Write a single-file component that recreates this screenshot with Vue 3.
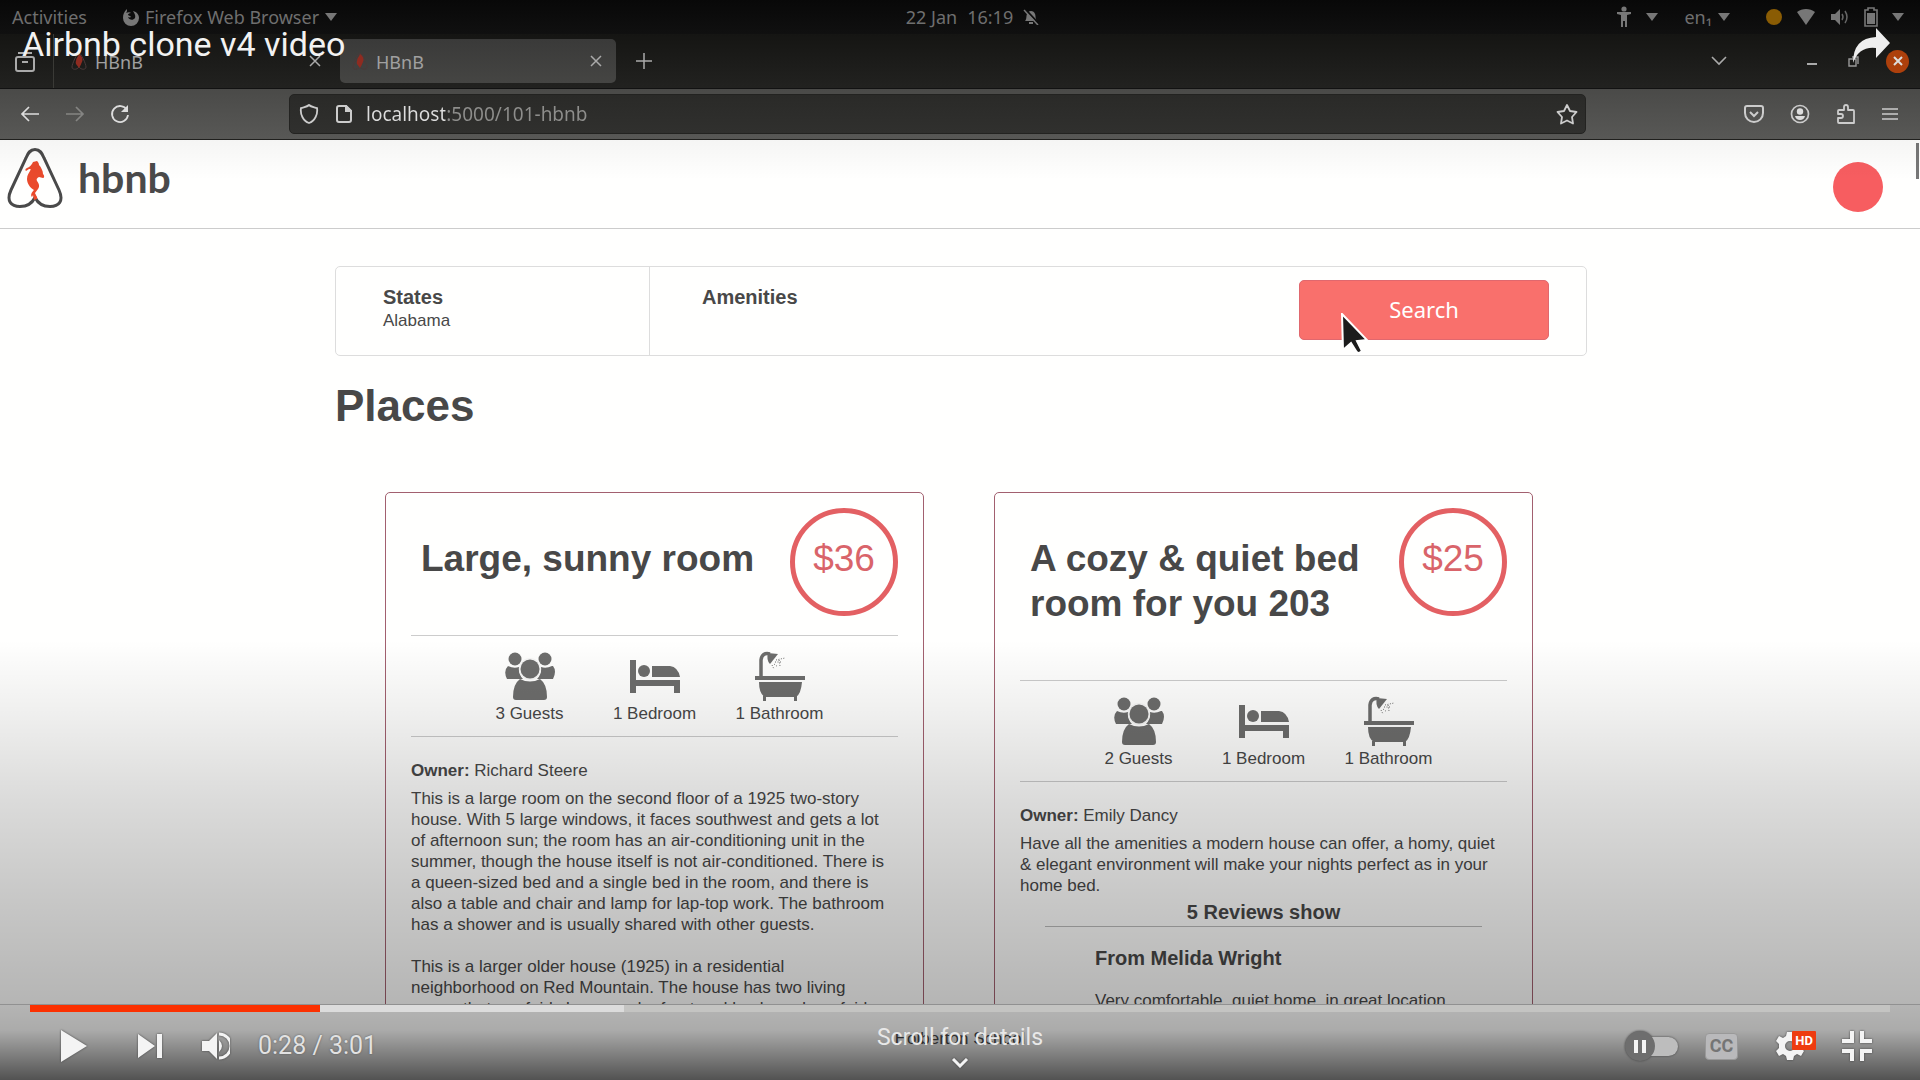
<script setup>
import { ref } from 'vue'

const elapsed = ref(28)
const duration = 181
const address = ref('localhost:5000/101-hbnb')
const tabs = [
  { title: 'HBnB', active: false },
  { title: 'HBnB', active: true },
]
const places = [
  {
    name: 'Large, sunny room',
    price: 36,
    guests: '3 Guests',
    owner: 'Richard Steere',
    text: `This is a large room on the second floor of a 1925 two-story
house. With 5 large windows, it faces southwest and gets a lot
of afternoon sun; the room has an air-conditioning unit in the
summer, though the house itself is not air-conditioned. There is
a queen-sized bed and a single bed in the room, and there is
also a table and chair and lamp for lap-top work. The bathroom
has a shower and is usually shared with other guests.

This is a larger older house (1925) in a residential
neighborhood on Red Mountain. The house has two living
rooms that are fairly large, and a front and back yard are fairly`,
    reviews: [],
  },
  {
    name: 'A cozy & quiet bed room for you 203',
    price: 25,
    guests: '2 Guests',
    owner: 'Emily Dancy',
    text: `Have all the amenities a modern house can offer, a homy, quiet
& elegant environment will make your nights perfect as in your
home bed.`,
    reviews: [{ from: 'From Melida Wright', text: 'Very comfortable, quiet home, in great location.' }],
  },
]
</script>

<template>
  <div class="player">
    <div class="topbar">
      <div class="bar-group">
        <span class="activities">Activities</span>
        <svg class="fox" viewBox="0 0 18 18" width="18" height="18"><path d="M5 1c0 2 0 3-1 4 2-1 4-1 5 0-2 0-3 1-3 2 1 1 3 1 3 2-1 1-3 0-3 0 1 3 5 4 7 1 1-3-1-5-2-7 4 1 6 4 6 7a8 8 0 0 1-16 0c0-4 1-6 4-9z" fill="#777" /></svg>
        <span>Firefox Web Browser</span>
        <i class="caret"></i>
      </div>
      <div class="bar-group clock">
        <span>22 Jan</span><span>16:19</span>
        <svg viewBox="0 0 16 16" width="16" height="16"><path d="M2 12c2-2 1-5 2-7 1-4 7-4 8 0 1 2 0 5 2 7zM6 13h4v2H6z" fill="#777" /><path d="M2 0l14 15" stroke="#0c0c0c" stroke-width="2" /><path d="M1 1l14 15" stroke="#777" stroke-width="1.5" /></svg>
      </div>
      <div class="bar-group status">
        <svg viewBox="0 0 16 22" width="16" height="22"><circle cx="8" cy="3" r="2.6" fill="#777" /><path d="M1 6h14v2l-4 1v12H9v-6H7v6H5V9L1 8z" fill="#777" /></svg>
        <i class="caret"></i>
        <span class="lang">en₁</span>
        <i class="caret"></i>
        <i class="dot"></i>
        <svg class="wifi" viewBox="0 0 20 18" width="20" height="18"><path d="M1 4C6 0 14 0 19 4L10 17z" fill="#777" /></svg>
        <svg class="sound" viewBox="0 0 20 18" width="20" height="18"><path d="M1 6h4l5-5v16l-5-5H1z" fill="#777" /><path d="M12 6q2 3 0 6M15 3q4 6 0 12" fill="none" stroke="#666" stroke-width="1.5" /></svg>
        <svg class="battery" viewBox="0 0 14 20" width="14" height="20"><path d="M4 1h6v2h3v16H1V3h3z" fill="none" stroke="#777" stroke-width="1.6" /><path d="M3 6h8v11H3z" fill="#777" /></svg>
        <i class="caret"></i>
      </div>
    </div>

    <div class="tabbar">
      <button class="icon recent" aria-label="Recent tabs"><svg viewBox="0 0 22 22" width="22" height="22" fill="none" stroke="#aaa" stroke-width="2"><rect x="2" y="7" width="18" height="14" rx="2" /><path d="M4 3h14M8 12h6" /></svg></button>
      <div v-for="(tab, i) in tabs" :key="i" class="tab" :class="{ active: tab.active }">
        <svg class="favicon" viewBox="0 0 16 18" width="16" height="18"><path d="M8 1C6 1 1 12 1 15c0 3 5 3 7 0 2 3 7 3 7 0C15 12 10 1 8 1z" fill="none" stroke="#4b3a3a" stroke-width="1" /><path d="M8 2c4 3 4 6 3 8-1 2-1 3-3 6-2-3-4-4-3-7 0-3 2-4 3-7z" fill="#8f2b20" /></svg>
        <span>{{ tab.title }}</span>
        <button class="icon" aria-label="Close tab"><svg viewBox="0 0 12 12" width="12" height="12" stroke="#aaa" stroke-width="1.5"><path d="M1 1l10 10M11 1L1 11" /></svg></button>
      </div>
      <button class="icon plus" aria-label="New tab"><svg viewBox="0 0 16 16" width="16" height="16" stroke="#aaa" stroke-width="1.5"><path d="M8 0v16M0 8h16" /></svg></button>
      <div class="window-buttons">
        <button class="icon" aria-label="List all tabs"><svg viewBox="0 0 16 10" width="16" height="10" fill="none" stroke="#aaa" stroke-width="1.6"><path d="M1 1l7 7 7-7" /></svg></button>
        <button class="icon minimise" aria-label="Minimise"><svg viewBox="0 0 10 10" width="10" height="10"><path d="M0 8h10" stroke="#aaa" stroke-width="2" /></svg></button>
        <button class="icon restore" aria-label="Restore"><svg viewBox="0 0 11 11" width="11" height="11" fill="none" stroke="#999" stroke-width="1.4"><path d="M1 3h7v7H1zM4 1h6v7" /></svg></button>
        <button class="icon close" aria-label="Close window"><svg viewBox="0 0 10 10" width="10" height="10" stroke="#ddd" stroke-width="2"><path d="M1 1l8 8M9 1L1 9" /></svg></button>
      </div>
    </div>

    <div class="toolbar">
      <div class="nav">
        <button class="icon" aria-label="Back"><svg viewBox="0 0 20 18" width="20" height="18" fill="none" stroke="#ddd" stroke-width="1.7"><path d="M19 9H2M9 2L2 9l7 7" /></svg></button>
        <button class="icon" aria-label="Forward"><svg viewBox="0 0 20 18" width="20" height="18" fill="none" stroke="#858583" stroke-width="1.7"><path d="M1 9h17M11 2l7 7-7 7" /></svg></button>
        <button class="icon" aria-label="Reload"><svg viewBox="0 0 20 20" width="20" height="20"><path d="M17 6a8 8 0 1 0 1 5" fill="none" stroke="#ddd" stroke-width="1.8" /><path d="M18 1v7h-7z" fill="#ddd" /></svg></button>
      </div>
      <div class="address">
        <svg viewBox="0 0 20 20" width="20" height="20" fill="none" stroke="#ccc" stroke-width="1.8"><path d="M10 1c2 2 5 2 8 3 1 6-2 13-8 15C4 17 1 10 2 4c3-1 6-1 8-3z" /></svg>
        <svg class="doc" viewBox="0 0 16 18" width="16" height="18" fill="none" stroke="#ccc" stroke-width="2"><path d="M3 1h7l5 5v9q0 2-2 2H3q-2 0-2-2V3q0-2 2-2z" /><path d="M10 1v5h5z" fill="#ccc" /></svg>
        <input v-model="address" aria-label="Address" spellcheck="false" />
        <button class="icon" aria-label="Bookmark"><svg viewBox="0 0 22 22" width="22" height="22" fill="none" stroke="#ccc" stroke-width="1.8" stroke-linejoin="round"><path d="M11 2l3 6 6.500 1-4.500 5 1 6.500-6-3-6 3 1-6.500-4.500-5L8 8z" /></svg></button>
      </div>
      <div class="tools">
        <button class="icon" aria-label="Pocket"><svg viewBox="0 0 20 20" width="20" height="20" fill="none" stroke="#ccc" stroke-width="2"><path d="M3 2h14q2 0 2 2v5a9 9 0 0 1-18 0V4q0-2 2-2z" /><path d="M6 8l4 4 4-4" /></svg></button>
        <button class="icon" aria-label="Account"><svg viewBox="0 0 20 20" width="20" height="20"><circle cx="10" cy="10" r="8.500" fill="none" stroke="#ccc" stroke-width="1.7" /><circle cx="10" cy="7.500" r="3.200" fill="#ddd" /><path d="M5 12h10q-1 4-5 4t-5-4z" fill="#ddd" /></svg></button>
        <button class="icon" aria-label="Extensions"><svg viewBox="0 0 20 22" width="20" height="22" fill="none" stroke="#ccc" stroke-width="1.8" stroke-linejoin="round"><path d="M3 7h5V4q0-2 2-2t2 2v3h5q1 0 1 1v12H3q-1 0-1-1v-4h3q2 0 2-2t-2-2H2V8q0-1 1-1z" /></svg></button>
        <button class="icon" aria-label="Menu"><svg viewBox="0 0 16 14" width="16" height="14" stroke="#ccc" stroke-width="1.6"><path d="M0 2h16M0 7h16M0 12h16" /></svg></button>
      </div>
    </div>

    <div class="page">
      <header class="site-header">
        <a href="#" class="logo">
          <svg viewBox="0 0 56 62" width="56" height="62"><path d="M28 2.500C23 2.500 21 6 19 11L4 43c-5 11 0 16.500 9 16.500 7 0 12-3 15-9 3 6 8 9 15 9 9 0 14-5.500 9-16.500L37 11c-2-5-4-8.500-9-8.500z" fill="none" stroke="#4a4a4a" stroke-width="3" /><path d="M30 14c1 1 2 2 2 4 2 2 4 6 4 9 2 2 1 4 0 4l-4-1c-2 1-3 2-2 4 2 3 3 5 1 8l-3 4c1 3 3 4 2 6l-3 1-1-5-1 2c-2-2 0-5 2-7-4-2-7-7-7-11 0-4 2-6 3-8 1-2 1-2-1-2l-3 2c-1-1-1-2 1-3 3-1 5-4 6-6z" fill="#ea4a2c" /></svg>
          <span>hbnb</span>
        </a>
        <i class="avatar"></i>
      </header>
      <main>
        <section class="filters">
          <div class="states"><h3>States</h3><p>Alabama</p></div>
          <div class="amenities"><h3>Amenities</h3></div>
          <button class="search">
            Search
            <svg class="cursor" viewBox="0 0 28 42" width="28" height="42"><path d="M1 1l25 26-10 1 5 10q-4 4-6 0l-5-8-8 7z" fill="#1c1c1c" stroke="#fff" stroke-width="2" /></svg>
          </button>
        </section>
        <h1>Places</h1>
        <section class="places">
          <article v-for="place in places" :key="place.name">
            <div class="headline">
              <h2>{{ place.name }}</h2>
              <div class="price">${{ place.price }}</div>
            </div>
            <div class="info">
              <div>
                <svg viewBox="0 0 50 50" width="50" height="50" fill="#6d6d6c"><circle cx="10" cy="8" r="6.500" /><circle cx="40" cy="8" r="6.500" /><path d="M3 15q6 3 11 1-1 7 4 12H2q-4-8 1-13zM47 15q-6 3-11 1 1 7-4 12h16q4-8 0-13z" /><circle cx="25" cy="18" r="11" fill="#f6f6f5" /><circle cx="25" cy="18" r="9.500" /><path d="M15 28q10 5 20 0 7 5 7 18 0 3-3 3H11q-3 0-3-3 0-13 7-18z" /></svg>
                <span>{{ place.guests }}</span>
              </div>
              <div>
                <svg viewBox="0 0 50 50" width="50" height="50" fill="#6d6d6c"><path d="M0 9h6v20h44v13h-6v-7H6v7H0z" /><circle cx="14" cy="20" r="6" /><path d="M22 15h18q8 1 10 11H22z" /></svg>
                <span>1 Bedroom</span>
              </div>
              <div>
                <svg viewBox="0 0 50 50" width="50" height="50" fill="#6d6d6c"><path d="M0 25h50v4H0zM4 31h43q-1 12-6 15H10Q4 43 4 31zM8 45h3v5H8zM39 45h3v5h-3z" /><path d="M6 26V9q1-8 9-6" fill="none" stroke="#6d6d6c" stroke-width="3.500" /><path d="M13 2l10 1-8 10q-4-4-2-11z" /><path d="M21 9l9-2M20 11l7 0M19 13l4 3M17 14l2 4M24 9l1 6" fill="none" stroke="#6d6d6c" stroke-dasharray="1 1.500" /></svg>
                <span>1 Bathroom</span>
              </div>
            </div>
            <p class="owner"><b>Owner:</b> {{ place.owner }}</p>
            <p class="about">{{ place.text }}</p>
            <div v-if="place.reviews.length" class="reviews">
              <h3>5 Reviews <span>show</span></h3>
              <ul>
                <li v-for="review in place.reviews" :key="review.from">
                  <h4>{{ review.from }}</h4>
                  <p>{{ review.text }}</p>
                </li>
              </ul>
            </div>
          </article>
        </section>
      </main>
      <footer>Holberton School</footer>
      <i class="scrollbar"></i>
      <div class="scrim"></div>
    </div>

    <div class="video-title">Airbnb clone v4 video</div>
    <button class="icon share" aria-label="Share"><svg viewBox="0 0 38 36" width="38" height="36"><path d="M23 0l14 15-14 15V20Q6 18 0 35 0 10 23 9z" fill="#eee" /></svg></button>

    <div class="controls">
      <input
        v-model.number="elapsed"
        class="progress"
        type="range"
        min="0"
        :max="duration"
        aria-label="Seek"
      />
      <div class="control-row">
        <div class="left">
          <button class="icon" aria-label="Play"><svg viewBox="0 0 26 32" width="26" height="32"><path d="M0 0l26 16L0 32z" /></svg></button>
          <button class="icon" aria-label="Next"><svg viewBox="0 0 24 26" width="24" height="26"><path d="M0 1l17 12L0 25zM19 1h5v24h-5z" /></svg></button>
          <button class="icon" aria-label="Mute"><svg viewBox="0 0 28 28" width="28" height="28"><path d="M0 9h7l8-8v26l-8-8H0z" /><path d="M17 8q6 6 0 12z" /><path d="M17 2a12 12 0 0 1 0 24" fill="none" stroke="#f4f4f4" stroke-width="3" /></svg></button>
          <span class="time">0:28 / 3:01</span>
        </div>
        <button class="details">
          Scroll for details
          <svg viewBox="0 0 18 10" width="18" height="10"><path d="M2 1l7 7 7-7" fill="none" stroke="#f4f4f4" stroke-width="3" /></svg>
        </button>
        <div class="right">
          <button class="icon autoplay" role="switch" aria-checked="false" aria-label="Autoplay"><svg viewBox="0 0 56 32" width="56" height="32"><rect x="12" y="7" width="42" height="19" rx="9.500" fill="#bdbdbd" /><circle cx="16" cy="16" r="15" fill="#6e6e6e" /><path d="M10 10h4v13h-4zM18 10h4v13h-4z" /></svg></button>
          <button class="icon captions" aria-label="Captions"><span>CC</span></button>
          <button class="icon settings" aria-label="Settings">
            <svg viewBox="0 0 28 28" width="28" height="28"><path fill-rule="evenodd" d="M11 0h6l1 4 3 2 4-2 3 5-3 3v4l3 3-3 5-4-2-3 2-1 4h-6l-1-4-3-2-4 2-3-5 3-3v-4L0 9l3-5 4 2 3-2zM14 9a5 5 0 1 0 0 10 5 5 0 0 0 0-10z" /></svg>
            <span class="hd">HD</span>
          </button>
          <button class="icon" aria-label="Exit full screen"><svg viewBox="0 0 30 30" width="30" height="30" fill="none" stroke="#f4f4f4" stroke-width="4"><path d="M0 10h10V0M20 0v10h10M0 20h10v10M20 30V20h10" /></svg></button>
        </div>
      </div>
    </div>
  </div>
</template>

<style>
body {
  margin: 0;
}
</style>

<style scoped>
* {
  box-sizing: border-box;
}
.player {
  position: relative;
  display: flex;
  flex-direction: column;
  height: 100vh;
  overflow: hidden;
  font-family: "Liberation Sans", Arial, sans-serif;
  color: #484848;
}
h1, h2, h3, h4, p, ul {
  margin: 0;
  padding: 0;
  list-style: none;
}
svg {
  display: block;
  flex: none;
}
.icon {
  display: flex;
  align-items: center;
  flex: none;
  padding: 0;
  border: 0;
  background: none;
  cursor: pointer;
}

/* desktop bar */
.topbar {
  display: grid;
  grid-template-columns: 1fr auto 1fr;
  height: 34px;
  padding: 0 16px 0 12px;
  background: linear-gradient(#080808, #101010);
  font: 18px/34px "Noto Sans", sans-serif;
  color: #6f6f6f;
}
.bar-group {
  display: flex;
  align-items: center;
}
.activities {
  margin-right: 35px;
}
.fox {
  margin-right: 5px;
}
.caret {
  margin-left: 6px;
  border: 6px solid transparent;
  border-top: 8px solid #777;
  border-bottom: 0;
}
.clock {
  gap: 10px;
  padding-left: 29px;
}
.status {
  justify-content: flex-end;
}
.status .caret {
  margin-left: 14px;
}
.lang {
  margin-left: 26px;
}
.lang + .caret {
  margin-left: 6px;
}
.dot {
  width: 16px;
  height: 16px;
  margin-left: 36px;
  border-radius: 50%;
  background: #8a5c04;
}
.wifi, .sound, .battery {
  margin-left: 14px;
}

/* tabs */
.tabbar {
  display: flex;
  align-items: center;
  height: 55px;
  border-bottom: 1px solid #121212;
  background: linear-gradient(#151513, #222220);
  font: 18px/24px "Noto Sans", sans-serif;
  color: #a0a0a0;
}
.recent {
  align-self: stretch;
  width: 54px;
  padding: 0 0 0 14px;
  border-right: 1px solid #3a3a36;
}
.tab {
  display: flex;
  align-items: center;
  gap: 8px;
  width: 276px;
  height: 44px;
  padding: 0 14px 0 12px;
  border-radius: 5px;
}
.tab span {
  padding-top: 2px;
}
.tab:first-of-type {
  margin: 0 5px;
}
.tab.active {
  background: linear-gradient(#3a3a39, #454543);
}
.tab .icon {
  margin-left: auto;
}
.plus {
  margin-left: 20px;
}
.window-buttons {
  display: flex;
  align-items: center;
  margin: 0 11px 0 auto;
}
.minimise {
  margin-left: 80px;
}
.restore {
  margin-left: 31px;
}
.close {
  justify-content: center;
  width: 23px;
  height: 23px;
  margin-left: 27px;
  border-radius: 50%;
  background: #ad400c;
}

/* toolbar */
.toolbar {
  display: flex;
  align-items: center;
  height: 51px;
  border-bottom: 1px solid #20201e;
  background: linear-gradient(#4a4a48, #585856);
}
.nav {
  display: flex;
  gap: 25px;
  width: 289px;
  padding-left: 20px;
}
.address {
  display: flex;
  flex: 1;
  align-items: center;
  height: 40px;
  padding: 0 7px 0 9px;
  border: 1px solid #232321;
  border-radius: 5px;
  background: linear-gradient(#2a2a28, #30302e);
}
.doc {
  margin: 0 14px 0 17px;
}
.address input {
  flex: 1;
  min-width: 0;
  padding: 0;
  border: 0;
  outline: 0;
  background: linear-gradient(90deg, #ddd 79px, #8e8e8c 79px);
  background-clip: text;
  color: transparent;
  font: 19px/28px "Noto Sans", sans-serif;
}
.tools {
  display: flex;
  align-items: center;
  justify-content: flex-end;
  gap: 26px;
  width: 334px;
  padding-right: 22px;
}

/* web page */
.page {
  position: relative;
  display: flex;
  flex: 1;
  flex-direction: column;
  min-height: 0;
  background: #fffffe;
}
.site-header {
  display: flex;
  align-items: flex-start;
  justify-content: space-between;
  height: 89px;
  padding: 0 37px 0 7px;
  border-bottom: 1px solid #ccc;
}
.logo {
  display: flex;
  align-items: center;
  gap: 15px;
  padding-top: 7px;
  color: #4a4a4a;
  font: 700 41px/52px Lato, sans-serif;
  text-decoration: none;
}
.avatar {
  width: 50px;
  height: 50px;
  margin-top: 22px;
  border-radius: 50%;
  background: #f75d60;
}
main {
  flex: 1;
  width: 1254px;
  max-width: 100%;
  min-height: 0;
  margin: 0 auto;
  padding-left: 2px;
  overflow: hidden;
}
.filters {
  display: flex;
  align-items: flex-start;
  height: 90px;
  margin-top: 37px;
  border: 1px solid #ddd;
  border-radius: 5px;
}
h3, h4 {
  font-size: 20px;
  line-height: 24px;
}
.states, .amenities {
  height: 100%;
  padding-top: 18px;
}
.states {
  width: 314px;
  padding-left: 47px;
  border-right: 1px solid #ddd;
}
.states p {
  font-size: 17px;
  line-height: 24px;
}
.amenities {
  flex: 1;
  padding-left: 52px;
}
.search {
  position: relative;
  width: 250px;
  height: 60px;
  margin: 13px 37px 0 0;
  padding: 0 0 2px;
  border: 1px solid #e0686e;
  border-radius: 5px;
  background: #f9706c;
  color: #fff;
  font: 22px/28px "Noto Sans", sans-serif;
}
.cursor {
  position: absolute;
  top: 32px;
  left: 41px;
}
h1 {
  margin-top: 24px;
  font-size: 44px;
  line-height: 52px;
}
.places {
  display: flex;
  align-items: flex-start;
  gap: 70px;
  margin-top: 60px;
  padding: 0 54px 0 50px;
}
article {
  flex: 1;
  min-width: 0;
  padding: 0 25px 60px;
  border: 1px solid #a2606f;
  border-radius: 5px;
  font-size: 17px;
  line-height: 21px;
}
.headline {
  display: flex;
  align-items: flex-start;
}
h2 {
  flex: 1;
  padding: 43px 18px 54px 10px;
  font-size: 37px;
  line-height: 45px;
}
.price {
  width: 108px;
  height: 108px;
  margin-top: 15px;
  border: 5px solid #e36063;
  border-radius: 50%;
  color: #d9646a;
  font-size: 37px;
  line-height: 92px;
  text-align: center;
}
.info {
  display: flex;
  justify-content: center;
  padding: 15px 0 12px;
  border: solid #ccc;
  border-width: 1px 0;
}
.info div {
  display: flex;
  flex-direction: column;
  align-items: center;
  gap: 2px;
  width: 125px;
}
.owner {
  margin: 23px 0 7px;
}
.about {
  white-space: pre;
}
.reviews {
  padding: 4px 25px 0;
}
.reviews h3 {
  padding-bottom: 2px;
  border-bottom: 1px solid #bbb;
  text-align: center;
}
.reviews ul {
  padding: 19px 0 0 50px;
}
.reviews h4 {
  margin-bottom: 20px;
}
.reviews li p {
  white-space: nowrap;
}
footer {
  height: 76px;
  border-top: 1px solid #ccc;
  font-size: 17px;
  line-height: 68px;
  text-align: center;
}
.scrollbar {
  position: absolute;
  top: 3px;
  right: 1px;
  width: 3px;
  height: 36px;
  background: #777;
}
.scrim {
  position: absolute;
  inset: 0;
  background:
    linear-gradient(rgb(0 0 0 / 4%), transparent 40px),
    linear-gradient(
      to top,
      rgb(0 0 0 / 68%),
      rgb(0 0 0 / 33%) 50px,
      rgb(0 0 0 / 29%) 76px,
      rgb(0 0 0 / 22%) 180px,
      rgb(0 0 0 / 14%) 280px,
      rgb(0 0 0 / 5%) 380px,
      transparent 440px
    );
  pointer-events: none;
}

/* player overlay */
.video-title {
  position: absolute;
  top: 24px;
  left: 22px;
  color: #f2f2f2;
  font: 34px/40px Roboto, sans-serif;
}
.share {
  position: absolute;
  top: 28px;
  right: 29px;
}
.controls {
  position: absolute;
  right: 0;
  bottom: 0;
  left: 0;
  height: 75px;
  font-family: Roboto, sans-serif;
}
.progress {
  display: block;
  width: calc(100% - 60px);
  height: 7px;
  margin: 0 30px;
  appearance: none;
  background: linear-gradient(90deg, #fb3000 290px, #dcdcdc 290px, #dcdcdc 594px, #c4c4c2 594px);
}
.progress::-webkit-slider-thumb {
  width: 0;
  height: 0;
  appearance: none;
}
.control-row {
  display: grid;
  grid-template-columns: 1fr auto 1fr;
  align-items: center;
  height: 68px;
  padding: 0 48px 0 61px;
  fill: #f4f4f4;
}
.left, .right {
  display: flex;
  align-items: center;
}
.control-row svg {
  filter: drop-shadow(0 0 1px #444);
}
.left .icon + .icon {
  margin-left: 51px;
}
.left .icon + .icon + .icon {
  margin-left: 40px;
}
.time {
  margin-left: 28px;
  color: #e2e2e2;
  font-size: 25px;
  line-height: 30px;
  text-shadow: 0 0 2px #555;
}
.details {
  display: flex;
  flex-direction: column;
  align-items: center;
  gap: 6px;
  padding: 0 13px 0 0;
  border: 0;
  background: none;
  color: #e8e8e8;
  font: 23px/28px Roboto, sans-serif;
}
.right {
  justify-content: flex-end;
}
.captions {
  justify-content: center;
  width: 33px;
  height: 27px;
  margin: 0 38px 0 25px;
  border: 1px solid #999;
  border-radius: 4px;
  background: #b9b9bb;
  color: #757575;
  font: 700 18px/24px Roboto, sans-serif;
}
.settings {
  position: relative;
  margin-right: 38px;
}
.hd {
  position: absolute;
  top: -1px;
  right: -12px;
  padding: 0 3px;
  border-radius: 1px;
  background: #ee3c10;
  color: #fff;
  font: 700 13px/19px Roboto, sans-serif;
}
</style>
